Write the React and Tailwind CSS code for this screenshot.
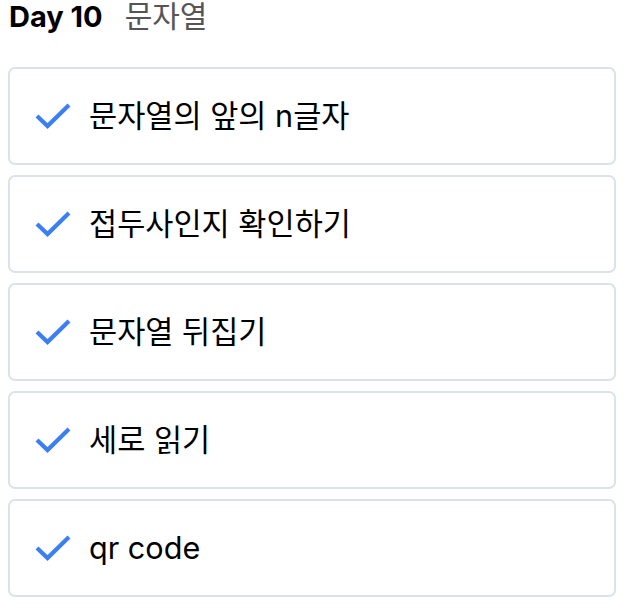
const ITEMS = ['문자열의 앞의 n글자', '접두사인지 확인하기', '문자열 뒤집기', '세로 읽기', 'qr code'];

function Check() {
  return (
    <svg width="36" height="26" viewBox="0 0 36 26" fill="none" className="shrink-0">
      <path d="M2 13 L12.5 23 L34 2" stroke="#3b7ff5" strokeWidth="4.2" strokeLinecap="butt" strokeLinejoin="miter" />
    </svg>
  );
}

export default function App() {
  return (
    <div className="w-[624px] h-[604px] bg-white px-2 pt-[1px] font-['Inter','Noto_Sans_CJK_KR',sans-serif] text-black">
      <div className="flex items-baseline pl-[1px]">
        <span className="text-[29px] leading-[30px] font-bold">Day 10</span>
        <span className="ml-[22px] text-[30px] leading-[30px] text-[#555]">문자열</span>
      </div>
      <div className="mt-[35px] flex flex-col gap-[10px]">
        {ITEMS.map((item) => (
          <div key={item} className="h-[98px] border-2 border-[#dae2eb] rounded-[7px] flex items-center pl-[25px] gap-[18px]">
            <Check />
            <span className="text-[30.6px] leading-none">{item}</span>
          </div>
        ))}
      </div>
    </div>
  );
}
